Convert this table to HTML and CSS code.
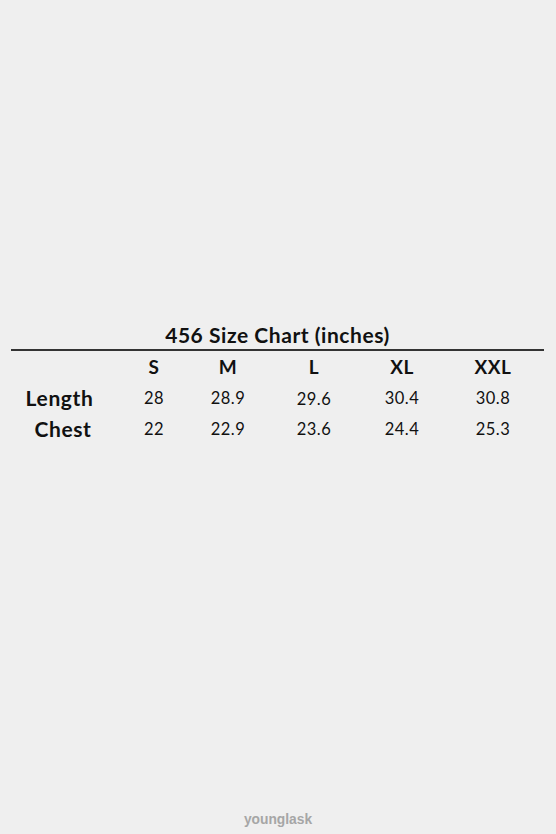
FILE: index.html
```html
<!DOCTYPE html>
<html lang="en">
<head>
<meta charset="utf-8">
<title>456 Size Chart</title>
<link rel="stylesheet" href="styles.css">
</head>
<body>
<main class="page">
  <section class="chart">
    <h1 class="chart-title">456 Size Chart (inches)</h1>
    <div class="rule"></div>
    <div class="grid">
      <div class="cell head label"></div>
      <div class="cell head">S</div>
      <div class="cell head">M</div>
      <div class="cell head">L</div>
      <div class="cell head">XL</div>
      <div class="cell head">XXL</div>

      <div class="cell label">Length</div>
      <div class="cell val">28</div>
      <div class="cell val">28.9</div>
      <div class="cell val low">29.6</div>
      <div class="cell val">30.4</div>
      <div class="cell val">30.8</div>

      <div class="cell label chest">Chest</div>
      <div class="cell val">22</div>
      <div class="cell val">22.9</div>
      <div class="cell val">23.6</div>
      <div class="cell val">24.4</div>
      <div class="cell val">25.3</div>
    </div>
  </section>
  <footer class="brand">younglask</footer>
</main>
</body>
</html>
```
FILE: styles.css
```css
html, body {
  margin: 0;
  padding: 0;
  background: #efefef;
}
.page {
  width: 556px;
  height: 834px;
  display: flex;
  flex-direction: column;
  font-family: Lato, "Open Sans", sans-serif;
  color: #111;
}
.chart {
  padding-top: 320px;
  padding-left: 11px;
}
.chart-title {
  margin: 0;
  width: 533px;
  text-align: center;
  font-size: 21px;
  letter-spacing: 0.55px;
  font-weight: 700;
  line-height: 29px;
  height: 29px;
}
.rule {
  width: 533px;
  height: 2px;
  background: #333;
}
.grid {
  display: grid;
  grid-template-columns: 97px 92px 56px 116px 60px 122px;
  grid-auto-rows: 31px;
}
.cell {
  display: flex;
  align-items: center;
  justify-content: center;
}
.head {
  font-weight: 700;
  font-size: 19px;
  letter-spacing: 0.5px;
}
.label {
  font-weight: 700;
  font-size: 21px;
  letter-spacing: 0.6px;
}
.chest {
  padding-left: 7px;
}
.val {
  font-size: 16.5px;
  letter-spacing: 0.5px;
  font-weight: 400;
}
.low {
  padding-top: 3px;
}
.brand {
  margin-top: auto;
  margin-bottom: 6px;
  text-align: center;
  font-family: "Liberation Sans", Arial, sans-serif;
  font-weight: 700;
  font-size: 13.8px;
  color: #a6a6a6;
  line-height: 16px;
}
```
